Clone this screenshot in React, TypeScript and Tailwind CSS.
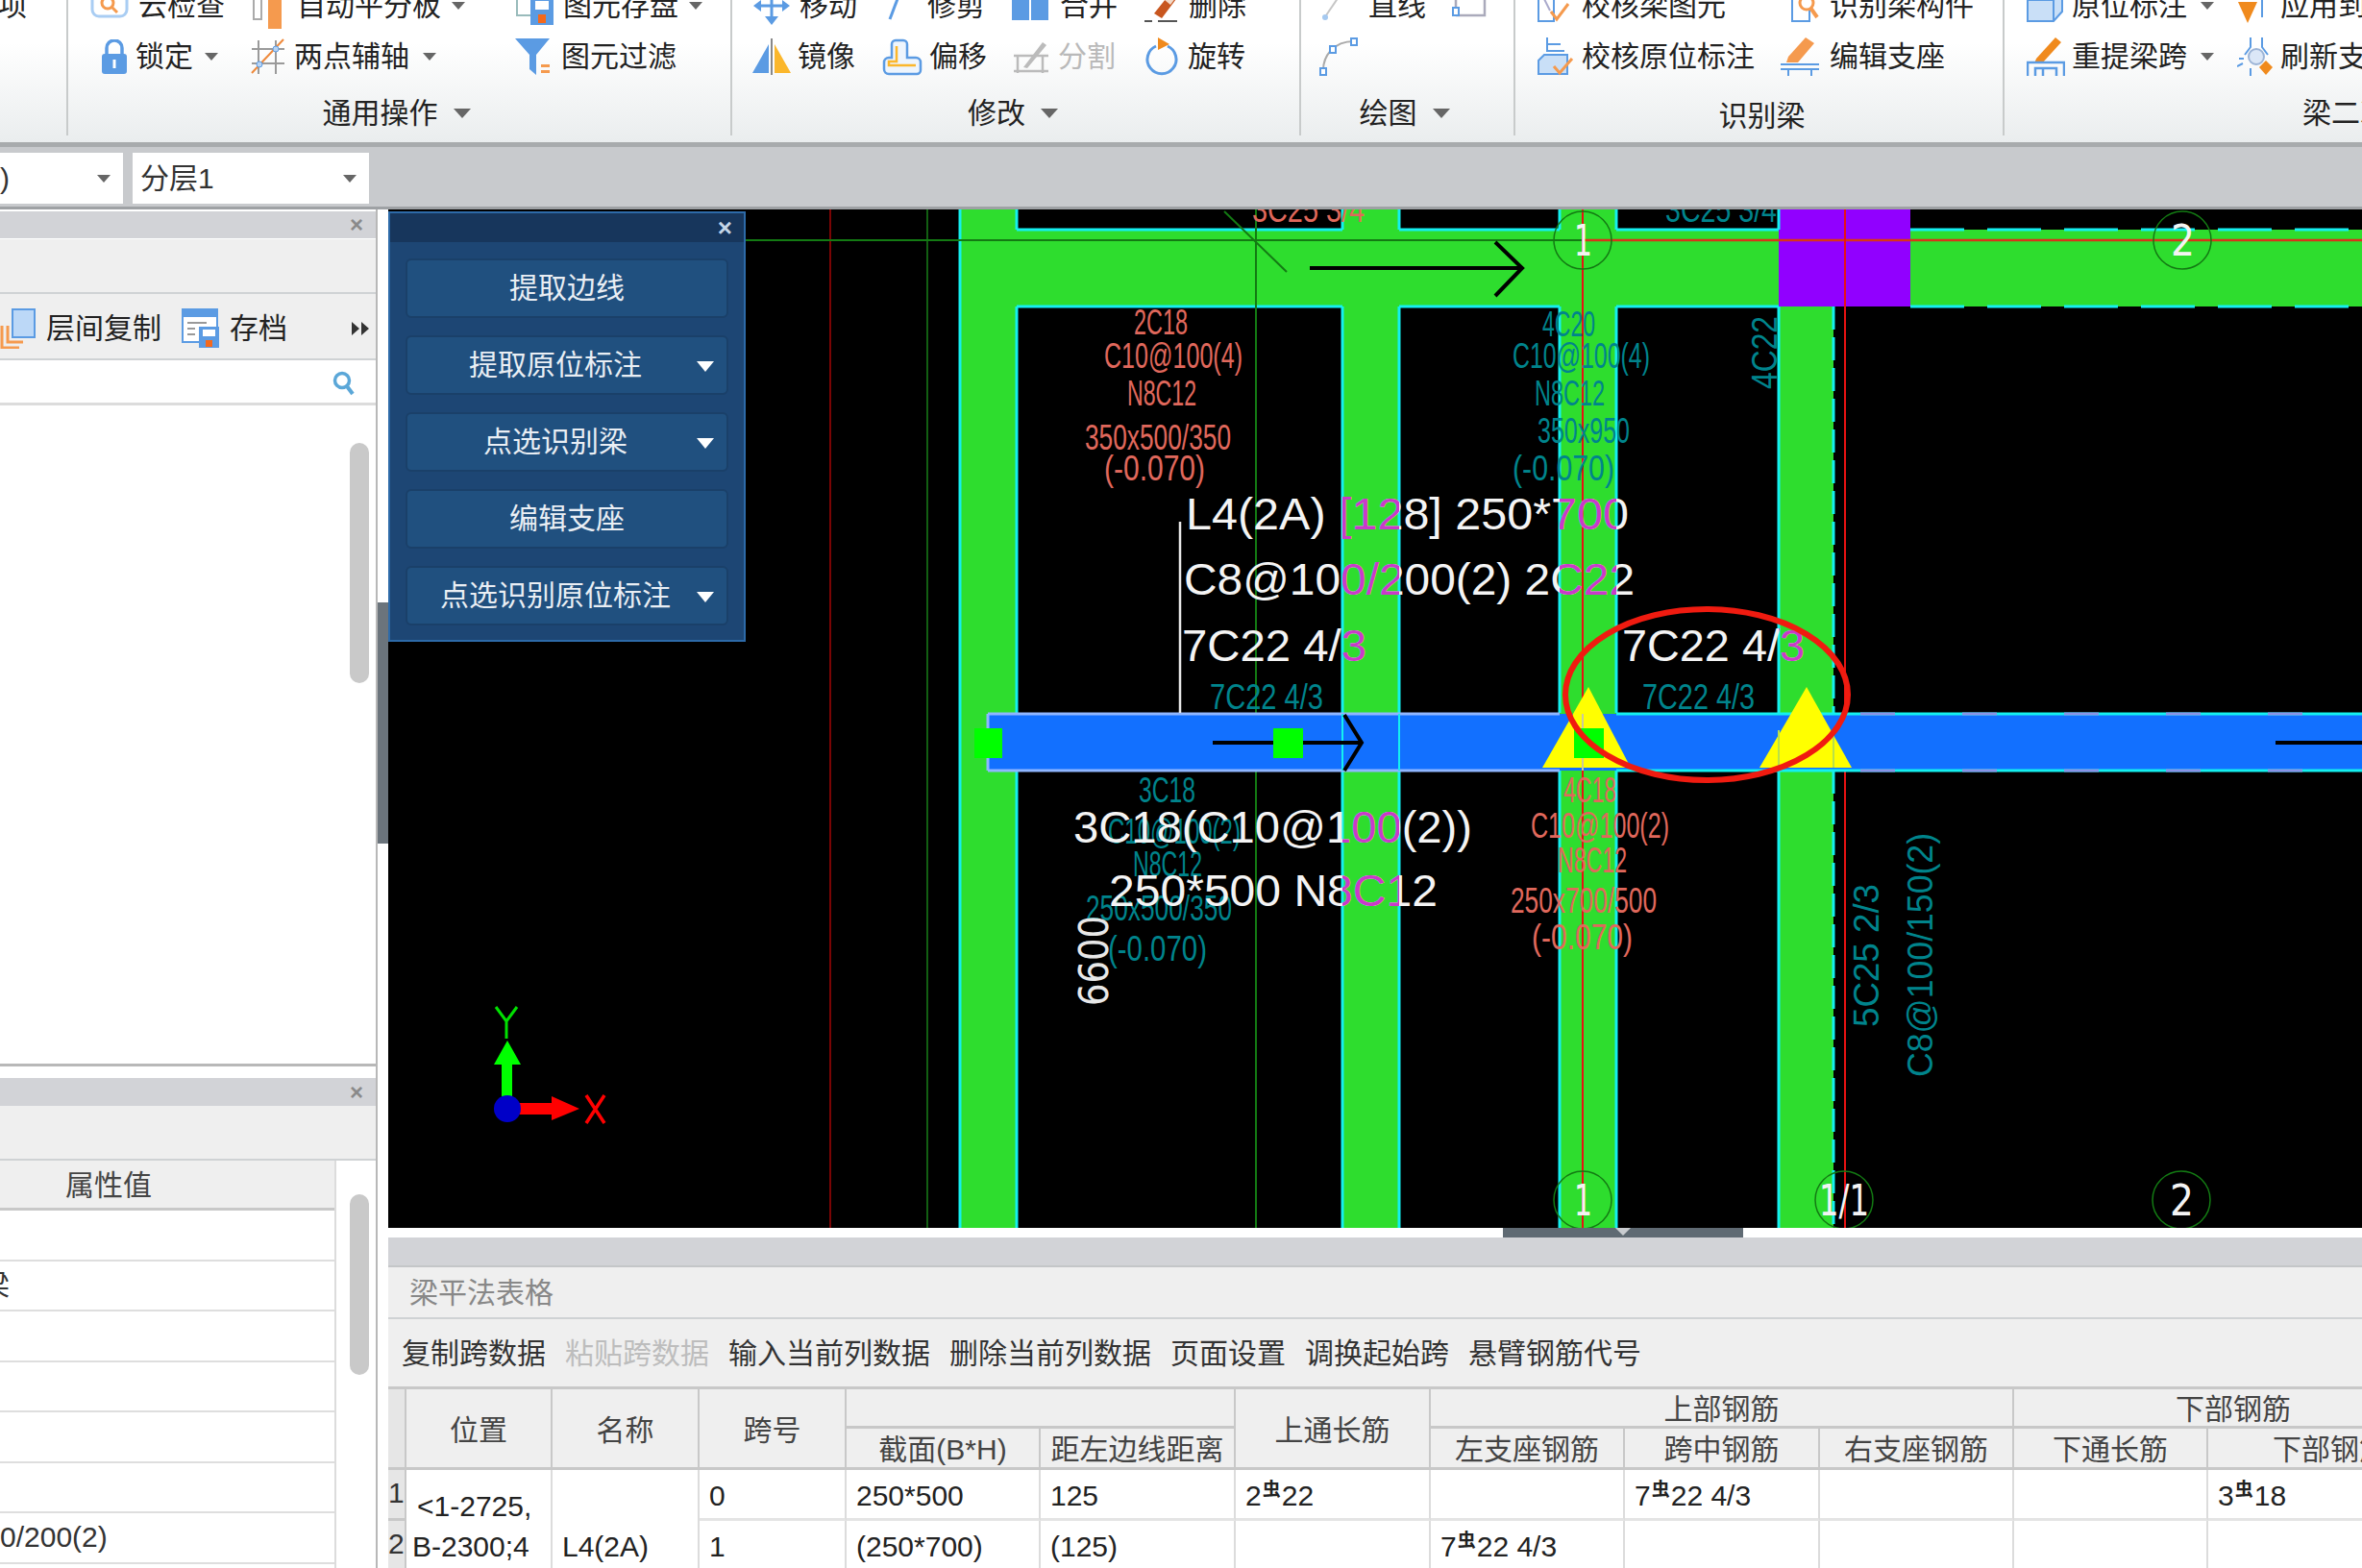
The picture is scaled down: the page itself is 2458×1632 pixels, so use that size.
import { ReactNode } from "react";

const BLUE = "#5b9be3";
const PALE = "#c9dff7";
const ORANGE = "#f59a4e";

function Caret({ className = "" }: { className?: string }) {
  return <span className={"inline-block border-x-[7px] border-x-transparent border-t-[8px] border-t-[#666] " + className} />;
}

function Tool({
  icon,
  text,
  className = "",
  slot = "w-[46px]",
  muted,
  caret,
}: {
  icon?: ReactNode;
  text?: string;
  className?: string;
  slot?: string;
  muted?: boolean;
  caret?: string;
}) {
  return (
    <div className={"flex items-center shrink-0 " + className}>
      <span className={"flex items-center shrink-0 " + slot}>{icon}</span>
      {text && <span className={"whitespace-nowrap " + (muted ? "text-[#b9b9b9]" : "text-[#222]")}>{text}</span>}
      {caret && <Caret className={caret} />}
    </div>
  );
}

function RibbonGroup({
  label,
  labelClass = "justify-center pr-[6px]",
  width,
  menu,
  children,
}: {
  label?: string;
  labelClass?: string;
  width: string;
  menu?: boolean;
  children?: ReactNode;
}) {
  return (
    <div className={"h-[141px] shrink-0 border-r-2 border-r-[#c8cbcb] flex flex-col " + width}>
      <div className="-mt-[21px] flex flex-col">{children}</div>
      {label && (
        <div className={"mt-[11px] h-[44px] flex items-center text-[#222] " + labelClass}>
          <span>{label}</span>
          {menu && <span className="ml-[16px] border-x-[9px] border-x-transparent border-t-[10px] border-t-[#666]" />}
        </div>
      )}
    </div>
  );
}

const IconCheck = () => (
  <svg width="40" height="34" viewBox="0 0 40 34">
    <rect x="2" y="2" width="36" height="26" rx="7" fill="none" stroke="#a9cdf3" strokeWidth="3" />
    <circle cx="18" cy="14" r="6" fill="none" stroke={ORANGE} strokeWidth="3" />
    <path d="M22 18l6 6" stroke={ORANGE} strokeWidth="3" />
  </svg>
);
const IconPlate = () => (
  <svg width="32" height="52" viewBox="0 0 32 52">
    <rect x="1" y="6" width="8" height="34" fill="none" stroke="#aaa" strokeWidth="2" />
    <rect x="16" y="6" width="14" height="44" fill={ORANGE} />
  </svg>
);
const IconStore = () => (
  <svg width="42" height="44" viewBox="0 0 42 44">
    <rect x="2" y="2" width="22" height="30" fill="#fff" stroke="#9bb" strokeWidth="2" />
    <rect x="16" y="14" width="24" height="28" fill={BLUE} />
    <rect x="21" y="17" width="14" height="9" fill="#fff" />
    <rect x="24" y="31" width="8" height="9" fill="#f5691c" />
  </svg>
);
const IconLock = () => (
  <svg width="28" height="36" viewBox="0 0 28 36">
    <path d="M6 16V9a8 8 0 0 1 16 0v7" fill="none" stroke={BLUE} strokeWidth="3.5" />
    <rect x="1" y="15" width="26" height="21" rx="3" fill={BLUE} />
    <rect x="12.5" y="21" width="3" height="9" fill="#fff" />
  </svg>
);
const IconTwoPoint = () => (
  <svg width="36" height="37" viewBox="0 0 36 37">
    <path d="M8 2v35M26 2v35M1 11h34M1 26h34" stroke="#9a9a9a" strokeWidth="2" />
    <path d="M1 36L34 1" stroke="#ef8a3c" strokeWidth="2" />
    <circle cx="9" cy="27" r="3" fill="#b9d4f3" stroke={BLUE} />
    <circle cx="26" cy="11" r="3" fill="#b9d4f3" stroke={BLUE} />
  </svg>
);
const IconFilter = () => (
  <svg width="36" height="38" viewBox="0 0 36 38">
    <path d="M0 0h36L22 17v21l-7-6V17z" fill={BLUE} />
    <path d="M27 27h9v3h-9zM27 33h9v3h-9z" fill={ORANGE} />
  </svg>
);
const IconMove = () => (
  <svg width="38" height="40" viewBox="0 0 38 40">
    <path d="M19 4v32M4 20h30" stroke={BLUE} strokeWidth="3" />
    <path d="M19 0l-6 8h12zM19 40l-7-9h14zM0 20l8-6v12zM38 20l-8-6v12z" fill={BLUE} />
  </svg>
);
const IconTrim = () => (
  <svg width="16" height="34" viewBox="0 0 16 34">
    <path d="M14 2L3 31" stroke={BLUE} strokeWidth="3" />
  </svg>
);
const IconMerge = () => (
  <svg width="38" height="30" viewBox="0 0 38 30">
    <rect width="18" height="30" fill={BLUE} />
    <rect x="20" width="18" height="30" fill={BLUE} />
    <rect y="0" width="38" height="6" fill="#7fb2ea" />
  </svg>
);
const IconErase = () => (
  <svg width="38" height="36" viewBox="0 0 38 36">
    <path d="M10 26L26 6l7 5-15 20z" fill="#c8561f" />
    <path d="M21 12l6-8 6 5-6 8z" fill="#f2d9c8" />
    <path d="M0 34h8M14 34h20" stroke="#555" strokeWidth="2" />
  </svg>
);
const IconMirror = () => (
  <svg width="40" height="38" viewBox="0 0 40 38">
    <path d="M17 6v30L0 36z" fill={BLUE} />
    <path d="M23 6v30h17z" fill="#fbb72c" />
    <path d="M20 0v38" stroke="#888" strokeWidth="2" />
  </svg>
);
const IconOffset = () => (
  <svg width="42" height="40" viewBox="0 0 42 40">
    <path d="M14 3h8a4 4 0 0 1 4 4v14h9a5 5 0 0 1 5 5v8a4 4 0 0 1-4 4H7a5 5 0 0 1-5-5v-7a5 5 0 0 1 5-5h3V7a4 4 0 0 1 4-4z" fill="#eef5fd" stroke={BLUE} strokeWidth="2.5" />
    <path d="M15 9v16H7v4h28" fill="none" stroke="#fbb72c" strokeWidth="2.5" />
  </svg>
);
const IconSplit = () => (
  <svg width="40" height="38" viewBox="0 0 40 38">
    <path d="M2 18h36M2 34h36M6 18v18M32 18v18" stroke="#bbb" strokeWidth="2.5" />
    <path d="M12 30L32 4l4 3-20 24z" fill="#bbb" />
  </svg>
);
const IconRotate = () => (
  <svg width="36" height="40" viewBox="0 0 36 40">
    <path d="M12 9a15 15 0 1 0 12 0" fill="none" stroke={BLUE} strokeWidth="3" />
    <path d="M14 0l12 7-12 6z" fill="#f08a1d" />
  </svg>
);
const IconLine = () => (
  <svg width="24" height="34" viewBox="0 0 24 34">
    <path d="M22 2L5 27" stroke="#c6c6c6" strokeWidth="2" />
    <circle cx="4" cy="29" r="3" fill="#a5c9f0" />
  </svg>
);
const IconRect = () => (
  <svg width="36" height="30" viewBox="0 0 36 30">
    <path d="M4 25V2M4 25h30V0" fill="none" stroke="#aab" strokeWidth="2.5" />
    <rect x="1" y="17" width="6" height="8" fill="#fff" stroke={BLUE} strokeWidth="2" />
  </svg>
);
const IconArc = () => (
  <svg width="40" height="40" viewBox="0 0 40 40">
    <path d="M4 34C4 20 14 4 36 4" fill="none" stroke="#aaa" strokeWidth="2" />
    <g fill="#fff" stroke={BLUE} strokeWidth="2">
      <rect x="1" y="32" width="6" height="7" />
      <rect x="33" y="1" width="6" height="7" />
      <rect x="11" y="9" width="6" height="7" />
    </g>
  </svg>
);
const IconVerifyA = () => (
  <svg width="36" height="38" viewBox="0 0 36 38">
    <rect x="1" y="1" width="16" height="34" fill="none" stroke={BLUE} strokeWidth="2" />
    <path d="M5 8l8 16" stroke="#aac" strokeWidth="2" />
    <path d="M14 25l6 8 12-16" fill="none" stroke={ORANGE} strokeWidth="3" />
  </svg>
);
const IconFind = () => (
  <svg width="30" height="38" viewBox="0 0 30 38">
    <rect x="1" y="1" width="18" height="34" fill="none" stroke={BLUE} strokeWidth="2" />
    <circle cx="16" cy="16" r="7" fill="#fff" stroke={ORANGE} strokeWidth="3" />
    <path d="M20 21l7 10" stroke={ORANGE} strokeWidth="4" />
  </svg>
);
const IconVerifyB = () => (
  <svg width="38" height="40" viewBox="0 0 38 40">
    <path d="M10 0v14h18M10 7h14" fill="none" stroke={BLUE} strokeWidth="2" />
    <path d="M1 38V24l6-6h24v20z" fill={PALE} stroke={BLUE} strokeWidth="2" />
    <path d="M17 30l6 7 13-15" fill="none" stroke={ORANGE} strokeWidth="3" />
  </svg>
);
const IconEditSeat = () => (
  <svg width="40" height="40" viewBox="0 0 40 40">
    <path d="M8 20L26 0l9 6-17 20H6z" fill={ORANGE} />
    <path d="M0 28h40M0 33h40" stroke={BLUE} strokeWidth="2" />
    <path d="M8 33v7M32 33v7" stroke={BLUE} strokeWidth="2" />
  </svg>
);
const IconBox = () => (
  <svg width="38" height="36" viewBox="0 0 38 36">
    <path d="M1 12l8-10h28v22l-9 10H1z" fill={PALE} stroke={BLUE} strokeWidth="2" />
    <path d="M1 12h27v22M28 12l9-10" fill="none" stroke={BLUE} strokeWidth="2" />
  </svg>
);
const IconApply = () => (
  <svg width="36" height="40" viewBox="0 0 36 40">
    <path d="M1 16h20L11 38z" fill="#f08a1d" />
    <path d="M11 2v12M26 2v30" stroke={BLUE} strokeWidth="2" />
  </svg>
);
const IconRebeam = () => (
  <svg width="40" height="40" viewBox="0 0 40 40">
    <path d="M10 22L30 0l6 5-20 22H8z" fill="#f08a1d" />
    <path d="M1 40V26h38v14M9 40V32h22v8M17 32v8" fill="none" stroke={BLUE} strokeWidth="2.5" />
  </svg>
);
const IconRefresh = () => (
  <svg width="40" height="40" viewBox="0 0 40 40">
    <path d="M14 0v10l-6 8M26 0v10l6 8M14 40v-8M2 22h5M0 30l6-3" fill="none" stroke={BLUE} strokeWidth="2" />
    <circle cx="20" cy="20" r="8" fill="#dbe7f7" stroke="#9cb4d6" strokeWidth="2" />
    <path d="M30 24l7 7-7 8-7-8z" fill="#f08a1d" />
  </svg>
);
const IconCopyFloor = () => (
  <svg width="38" height="42" viewBox="0 0 38 42">
    <path d="M2 18v23h18M8 18v17h16" fill="none" stroke={ORANGE} strokeWidth="3" />
    <rect x="13" y="1" width="23" height="29" fill="#bcd8f7" stroke={BLUE} strokeWidth="2" />
  </svg>
);
const IconArchive = () => (
  <svg width="40" height="42" viewBox="0 0 40 42">
    <rect x="1" y="1" width="36" height="34" fill="#fff" stroke={BLUE} strokeWidth="2" />
    <rect x="1" y="1" width="36" height="8" fill={BLUE} />
    <path d="M6 15h20M6 21h8M6 27h8" stroke="#999" strokeWidth="2" />
    <rect x="18" y="19" width="21" height="22" fill={BLUE} />
    <rect x="22" y="22" width="13" height="7" fill="#fff" />
    <rect x="25" y="33" width="7" height="7" fill="#f5691c" />
  </svg>
);
const IconMore = () => (
  <svg width="18" height="14" viewBox="0 0 18 14">
    <path d="M0 0l8 7-8 7zM10 0l8 7-8 7z" fill="#333" />
  </svg>
);

function Ribbon() {
  return (
    <div className="h-[153px] shrink-0 overflow-hidden border-b-[5px] border-b-[#a8abad] bg-linear-to-b from-white from-30% to-[#eaedee] flex items-start">
      <RibbonGroup width="w-[71px]">
        <div className="h-[53px] flex items-center justify-start w-[36px] overflow-hidden text-[#222]">
          <span className="whitespace-nowrap -ml-[2px]">项</span>
        </div>
      </RibbonGroup>
      <RibbonGroup width="w-[691px]" label="通用操作" menu>
        <div className="h-[53px] flex pl-[23px]">
          <Tool icon={<IconCheck />} text="云检查" slot="w-[50px]" className="w-[169px]" />
          <Tool icon={<IconPlate />} text="自动平分板" className="w-[273px]" caret="ml-[11px]" />
          <Tool icon={<IconStore />} text="图元存盘" slot="w-[50px]" caret="ml-[11px]" />
        </div>
        <div className="h-[53px] flex pl-[34px]">
          <Tool icon={<IconLock />} text="锁定" slot="w-[36px]" className="w-[156px]" caret="ml-[12px]" />
          <Tool icon={<IconTwoPoint />} text="两点辅轴" slot="w-[45px]" className="w-[275px]" caret="ml-[14px]" />
          <Tool icon={<IconFilter />} text="图元过滤" slot="w-[48px]" />
        </div>
      </RibbonGroup>
      <RibbonGroup width="w-[592px]" label="修改" menu>
        <div className="h-[53px] flex pl-[22px]">
          <Tool icon={<IconMove />} text="移动" slot="w-[48px]" className="w-[139px]" />
          <Tool icon={<IconTrim />} text="修剪" slot="w-[42px]" className="w-[130px]" />
          <Tool icon={<IconMerge />} text="合并" slot="w-[50px]" className="w-[138px]" />
          <Tool icon={<IconErase />} text="删除" />
        </div>
        <div className="h-[53px] flex pl-[21px]">
          <Tool icon={<IconMirror />} text="镜像" slot="w-[47px]" className="w-[135px]" />
          <Tool icon={<IconOffset />} text="偏移" slot="w-[49px]" className="w-[135px]" />
          <Tool icon={<IconSplit />} text="分割" slot="w-[48px]" className="w-[138px]" muted />
          <Tool icon={<IconRotate />} text="旋转" slot="w-[45px]" />
        </div>
      </RibbonGroup>
      <RibbonGroup width="w-[223px]" label="绘图" menu>
        <div className="h-[53px] flex pl-[21px]">
          <Tool icon={<IconLine />} text="直线" slot="w-[49px]" className="w-[136px]" />
          <Tool icon={<IconRect />} slot="w-[40px]" />
        </div>
        <div className="h-[53px] flex pl-[19px]">
          <Tool icon={<IconArc />} slot="w-[40px]" />
        </div>
      </RibbonGroup>
      <RibbonGroup width="w-[509px]" label="识别梁" labelClass="justify-center pl-[6px] pt-[6px]">
        <div className="h-[53px] flex pl-[23px]">
          <Tool icon={<IconVerifyA />} text="校核梁图元" className="w-[264px]" />
          <Tool icon={<IconFind />} text="识别梁构件" slot="w-[40px]" />
        </div>
        <div className="h-[53px] flex pl-[23px]">
          <Tool icon={<IconVerifyB />} text="校核原位标注" className="w-[253px]" />
          <Tool icon={<IconEditSeat />} text="编辑支座" slot="w-[51px]" />
        </div>
      </RibbonGroup>
      <div className="h-[141px] flex-1 flex flex-col overflow-hidden">
        <div className="-mt-[21px] flex flex-col">
          <div className="h-[53px] flex pl-[23px]">
            <Tool icon={<IconBox />} text="原位标注" slot="w-[47px]" className="w-[219px]" caret="ml-[14px]" />
            <Tool icon={<IconApply />} text="应用到同名梁" slot="w-[45px]" />
          </div>
          <div className="h-[53px] flex pl-[23px]">
            <Tool icon={<IconRebeam />} text="重提梁跨" slot="w-[47px]" className="w-[219px]" caret="ml-[14px]" />
            <Tool icon={<IconRefresh />} text="刷新支座尺寸" slot="w-[45px]" />
          </div>
        </div>
        <div className="mt-[11px] h-[44px] flex items-center pl-[310px] whitespace-nowrap text-[#222]">梁二次编辑</div>
      </div>
    </div>
  );
}

function Combo({ className, text }: { className: string; text: string }) {
  return (
    <div className={"h-[53px] bg-white flex items-center justify-between pr-[13px] text-[#333] " + className}>
      <span>{text}</span>
      <Caret />
    </div>
  );
}

function CloseX() {
  return <span className="text-[24px] font-bold leading-none text-[#8a8a8a]">×</span>;
}

function LeftPanel() {
  return (
    <div className="w-[404px] shrink-0 flex bg-white">
      <div className="w-[393px] shrink-0 flex flex-col border-r-2 border-r-[#b8b8b8]">
        <div className="mt-[2px] h-[28px] bg-[#d2d3d7] flex items-center justify-end pr-[13px] shrink-0">
          <CloseX />
        </div>
        <div className="mt-[1px] h-[57px] bg-[#efefef] border-b-2 border-b-[#cfd2d4] shrink-0" />
        <div className="h-[69px] bg-[#efefef] border-b-2 border-b-[#cfd2d4] flex items-center pt-[4px] text-[#555] shrink-0">
          <Tool icon={<IconCopyFloor />} text="层间复制" slot="w-[48px]" className="w-[189px]" />
          <Tool icon={<IconArchive />} text="存档" slot="w-[50px]" className="w-[177px]" />
          <IconMore />
        </div>
        <div className="h-[47px] border-b-[3px] border-b-[#dcdcdc] flex items-center justify-end pr-[21px] pt-[3px] shrink-0">
          <svg width="24" height="26" viewBox="0 0 24 26">
            <circle cx="10" cy="10" r="7.5" fill="none" stroke="#5ba7d8" strokeWidth="3.5" />
            <path d="M15 16l6 8" stroke="#5ba7d8" strokeWidth="4" />
          </svg>
        </div>
        <div className="h-[688px] border-b-[3px] border-b-[#b8b8b8] pt-[39px] pl-[364px] shrink-0">
          <div className="w-[20px] h-[250px] rounded-full bg-[#c9c9c9]" />
        </div>
        <div className="mt-[12px] h-[29px] bg-[#d2d3d7] flex items-center justify-end pr-[13px] shrink-0">
          <CloseX />
        </div>
        <div className="h-[57px] bg-[#efefef] border-b-2 border-b-[#cfd2d4] shrink-0" />
        <div className="flex-1 flex overflow-hidden">
          <div className="w-[350px] shrink-0 border-r-2 border-r-[#dcdcdc]">
            <div className="h-[52px] bg-[#efefef] border-b-[3px] border-b-[#c8c8c8] flex items-center text-[#444] pl-[68px] pt-[3px]">属性值</div>
            <PropRow />
            <PropRow text="梁" cut />
            <PropRow />
            <PropRow />
            <PropRow />
            <PropRow />
            <PropRow text="0/200(2)" />
            <PropRow />
          </div>
          <div className="pt-[35px] pl-[14px]">
            <div className="w-[20px] h-[188px] rounded-full bg-[#c9c9c9]" />
          </div>
        </div>
      </div>
      <div className="flex-1 pt-[409px]">
        <div className="h-[251px] bg-[#6b747c]" />
      </div>
    </div>
  );
}

function PropRow({ text, cut }: { text?: string; cut?: boolean }) {
  return (
    <div className="h-[52.5px] border-b-2 border-b-[#dedede] flex items-center overflow-hidden text-[#333]">
      <span className={cut ? "-ml-[20px]" : ""}>{text}</span>
    </div>
  );
}

function FloatButton({ text, caret }: { text: string; caret?: boolean }) {
  return (
    <div className={"h-[62px] rounded-md border-2 border-[#1a4069] bg-[#20507f] text-[#e9eef4] flex items-center justify-center relative " + (caret ? "pr-[24px]" : "")}>
      {text}
      {caret && <span className="absolute right-[13px] top-[25px] border-x-[9px] border-x-transparent border-t-[11px] border-t-white" />}
    </div>
  );
}

function Cad({
  x,
  y,
  w,
  size = 37,
  color,
  up,
  font = "Liberation Sans",
  children,
}: {
  x: number;
  y: number;
  w: number;
  size?: number;
  color: string;
  up?: boolean;
  font?: string;
  children: string;
}) {
  return (
    <text
      x={x}
      y={y}
      fontSize={size}
      fill={color}
      fontFamily={font}
      textLength={w}
      lengthAdjust="spacingAndGlyphs"
      transform={up ? `rotate(-90 ${x} ${y})` : undefined}
    >
      {children}
    </text>
  );
}

// white text that turns magenta where it runs over a green column
function Note({ x, y, w, children }: { x: number; y: number; w: number; children: string }) {
  return (
    <>
      <Cad x={x} y={y} w={w} size={47} color="#f4f4f4">{children}</Cad>
      <g clipPath="url(#columns)">
        <Cad x={x} y={y} w={w} size={47} color="#c93ac9">{children}</Cad>
      </g>
    </>
  );
}

const TEAL = "#00848c";
const SALMON = "#e0685c";
const GREEN = "#2edd2e";
const CYAN = "#14f0f0";

function Axis({ x, y, label, dx = -9, w = 19 }: { x: number; y: number; label: string; dx?: number; w?: number }) {
  return (
    <>
      <circle cx={x} cy={y} r="30" fill="none" stroke="#137a13" strokeWidth="1.5" />
      <Cad x={x + dx} y={y + 16} w={w} size={44} color="#f4f4f4" font="DejaVu Sans">{label}</Cad>
    </>
  );
}

function Drawing() {
  const vEdge = (x: number) => (
    <path d={`M${x} 218V239M${x} 319V742M${x} 802V1278`} stroke={CYAN} strokeWidth="3" />
  );
  return (
    <svg className="block" width="2054" height="1060" viewBox="404 218 2054 1060">
      <defs>
        <clipPath id="columns">
          <rect x="1397" y="218" width="59" height="1060" />
          <rect x="1623" y="218" width="59" height="1060" />
          <rect x="1851" y="218" width="57" height="1060" />
        </clipPath>
      </defs>
      <rect x="404" y="218" width="2054" height="1060" fill="#000" />
      <path d="M864 218V1278" stroke="#7a0404" strokeWidth="2" />
      <path d="M965 218V1278" stroke="#125e12" strokeWidth="2" />

      <rect x="999" y="239" width="1459" height="80" fill={GREEN} />
      <rect x="999" y="218" width="59" height="1060" fill={GREEN} />
      <rect x="1397" y="218" width="59" height="1060" fill={GREEN} />
      <rect x="1623" y="218" width="59" height="1060" fill={GREEN} />
      <rect x="1851" y="218" width="57" height="1060" fill={GREEN} />
      <rect x="1851" y="218" width="137" height="101" fill="#9100ff" />

      <path d="M999 218V1278" stroke={CYAN} strokeWidth="3" />
      {vEdge(1058)}
      {vEdge(1397)}
      {vEdge(1456)}
      {vEdge(1623)}
      {vEdge(1682)}
      {vEdge(1851)}
      <path d="M1908 319V742M1908 802V1278" stroke={CYAN} strokeWidth="3" strokeDasharray="24 8" />
      <path d="M1058 239H1397M1456 239H1623M1682 239H1851M1058 319H1397M1456 319H1623M1682 319H1851" stroke={CYAN} strokeWidth="3" />
      <path d="M1988 239H2458M1988 319H2458" stroke={CYAN} strokeWidth="3" strokeDasharray="56 24" />

      <path d="M776 250H1647" stroke="#137a13" strokeWidth="2" />
      <path d="M1307 218V1278" stroke="#137a13" strokeWidth="2" />
      <path d="M1274 220L1339 283" stroke="#137a13" strokeWidth="2" />
      <path d="M1647 250H2458" stroke="#d8341a" strokeWidth="2.5" />
      <path d="M1647 218V1278M1920 218V1278" stroke="#e81212" strokeWidth="2" />

      <path d="M1363 279H1584M1556 252L1584 279L1556 308" fill="none" stroke="#000" strokeWidth="4" />

      <Cad x={1303} y={231} w={117} color={SALMON}>3C25 3/4</Cad>
      <Cad x={1733} y={231} w={116} color={TEAL}>3C25 3/4</Cad>
      <Cad x={1849} y={405} w={76} color={TEAL} up>4C22</Cad>

      <Cad x={1180} y={348} w={56} color={SALMON}>2C18</Cad>
      <Cad x={1149} y={383} w={144} color={SALMON}>C10@100(4)</Cad>
      <Cad x={1173} y={422} w={72} color={SALMON}>N8C12</Cad>
      <Cad x={1129} y={468} w={152} color={SALMON}>350x500/350</Cad>
      <Cad x={1149} y={500} w={105} color={SALMON}>(-0.070)</Cad>

      <Cad x={1605} y={350} w={55} color={TEAL}>4C20</Cad>
      <Cad x={1574} y={383} w={143} color={TEAL}>C10@100(4)</Cad>
      <Cad x={1597} y={422} w={73} color={TEAL}>N8C12</Cad>
      <Cad x={1600} y={461} w={96} color={TEAL}>350x950</Cad>
      <Cad x={1574} y={500} w={106} color={TEAL}>(-0.070)</Cad>

      <Cad x={1185} y={835} w={59} color={TEAL}>3C18</Cad>
      <Cad x={1153} y={878} w={138} color={TEAL}>C10@100(2)</Cad>
      <Cad x={1179} y={912} w={72} color={TEAL}>N8C12</Cad>
      <Cad x={1130} y={958} w={152} color={TEAL}>250x500/350</Cad>
      <Cad x={1153} y={1000} w={103} color={TEAL}>(-0.070)</Cad>

      <Cad x={1627} y={835} w={55} color={SALMON}>4C18</Cad>
      <Cad x={1593} y={872} w={144} color={SALMON}>C10@100(2)</Cad>
      <Cad x={1621} y={908} w={72} color={SALMON}>N8C12</Cad>
      <Cad x={1572} y={950} w={152} color={SALMON}>250x700/500</Cad>
      <Cad x={1594} y={988} w={105} color={SALMON}>(-0.070)</Cad>

      <Cad x={1955} y={1069} w={149} color={TEAL} up>5C25 2/3</Cad>
      <Cad x={2011} y={1121} w={254} color={TEAL} up>C8@100/150(2)</Cad>

      <Cad x={1259} y={738} w={118} color={TEAL}>7C22 4/3</Cad>
      <Cad x={1709} y={738} w={117} color={TEAL}>7C22 4/3</Cad>

      <rect x="1028" y="743" width="1430" height="59" fill="#1270ff" />
      <path d="M1028 743H1623M1028 802H1623" stroke="#8fb6ff" strokeWidth="3" />
      <path d="M1682 743H2458M1682 802H2458" stroke={CYAN} strokeWidth="3" />
      <path d="M1936 743H2458M1936 802H2458" stroke="#8a93e8" strokeWidth="3" strokeDasharray="36 70" />
      <path d="M1028 743V802" stroke="#8fb6ff" strokeWidth="3" />
      <path d="M1397 743V802M1456 743V802" stroke={CYAN} strokeWidth="2" />
      <path d="M1262 773H1417M1399 744L1417 773L1399 802" fill="none" stroke="#000" strokeWidth="4" />
      <path d="M2368 773H2458" stroke="#000" strokeWidth="4" />

      <path d="M1653 715L1697 799H1605Z" fill="#ffff00" />
      <path d="M1880 715L1927 799H1831Z" fill="#ffff00" />
      <path d="M1647 743V802" stroke="#c9c9a0" strokeWidth="2" />
      <path d="M1851 760V799M1908 760V799" stroke="#b8e04a" strokeWidth="2" />
      <rect x="1014" y="758" width="29" height="31" fill="#00ff00" />
      <rect x="1325" y="758" width="31" height="31" fill="#00ff00" />
      <rect x="1638" y="758" width="31" height="31" fill="#00ff00" />

      <path d="M1228 543V742" stroke="#e8e8e8" strokeWidth="2.5" />
      <Note x={1234} y={551} w={461}>L4(2A) [128] 250*700</Note>
      <Note x={1232} y={619} w={469}>C8@100/200(2) 2C22</Note>
      <Note x={1230} y={688} w={192}>7C22 4/3</Note>
      <Note x={1688} y={688} w={190}>7C22 4/3</Note>
      <Note x={1117} y={877} w={415}>3C18(C10@100(2))</Note>
      <Note x={1154} y={943} w={342}>250*500 N8C12</Note>
      <Cad x={1153} y={1047} w={94} size={42} color="#e8e8e8" font="DejaVu Sans" up>6600</Cad>

      <Axis x={1647} y={250} label="1" />
      <Axis x={2271} y={250} label="2" dx={-12} w={25} />
      <Axis x={1647} y={1249} label="1" />
      <Axis x={1919} y={1249} label="1/1" dx={-26} w={52} />
      <Axis x={2270} y={1249} label="2" dx={-12} w={25} />

      <ellipse cx="1776" cy="723" rx="147" ry="89" fill="none" stroke="#f01b10" strokeWidth="6" />

      <path d="M516 1048l11 15 11-15M527 1063v18" fill="none" stroke="#00e000" strokeWidth="3" />
      <path d="M528 1083l14 25h-9v33h-11v-33h-8z" fill="#00ff00" />
      <path d="M540 1148h34v-7l29 13-29 12v-6h-34z" fill="#ff0000" />
      <circle cx="528" cy="1154" r="14" fill="#0000c8" />
      <path d="M610 1140l19 29M629 1140l-19 29" stroke="#ff0000" strokeWidth="3.5" />
    </svg>
  );
}

const headCell = "bg-[#efefef] border-r-2 border-r-[#c8c8c8] border-b-[3px] border-b-[#c8c8c8] flex items-center justify-center pt-[4px] text-[#444] whitespace-nowrap";
const bodyCell = "bg-white border-r-2 border-r-[#dcdcdc] border-b-[3px] border-b-[#e4e4e4] flex items-center pl-[10px] pt-[3px] text-[#222] whitespace-nowrap";

function Rebar({ n, rest }: { n: string; rest: string }) {
  return (
    <>
      {n}
      <span className="text-[19px] font-bold leading-none -translate-y-[6px] inline-block mx-[1px]">虫</span>
      {rest}
    </>
  );
}

function BeamTable() {
  return (
    <div className="grid grid-cols-[19px_152px_153px_153px_202px_203px_203px_202px_203px_202px_202px_256px] grid-rows-[41px_43px_53px_53px]">
      <div className="row-span-2 bg-[#e6e6e6] border-r-2 border-r-[#c8c8c8] border-b-[3px] border-b-[#c8c8c8]" />
      <div className={headCell + " row-span-2"}>位置</div>
      <div className={headCell + " row-span-2"}>名称</div>
      <div className={headCell + " row-span-2"}>跨号</div>
      <div className={headCell + " col-span-2"} />
      <div className={headCell + " row-span-2"}>上通长筋</div>
      <div className={headCell + " col-span-3"}>上部钢筋</div>
      <div className={headCell + " col-span-2"}>下部钢筋</div>

      <div className={headCell}>截面(B*H)</div>
      <div className={headCell}>距左边线距离</div>
      <div className={headCell}>左支座钢筋</div>
      <div className={headCell}>跨中钢筋</div>
      <div className={headCell}>右支座钢筋</div>
      <div className={headCell}>下通长筋</div>
      <div className={headCell}>下部钢筋</div>

      <div className="bg-[#e6e6e6] border-r-2 border-r-[#c8c8c8] border-b-[3px] border-b-[#c8c8c8] text-[#333] leading-[48px]">1</div>
      <div className="row-span-2 bg-white border-r-2 border-r-[#dcdcdc] pl-[6px] pt-[17px] leading-[42px] text-[#222] whitespace-nowrap">
        <div className="pl-[5px]">&lt;1-2725,</div>
        <div>B-2300;4</div>
      </div>
      <div className="row-span-2 bg-white border-r-2 border-r-[#dcdcdc] pl-[10px] pt-[59px] leading-[42px] text-[#222]">L4(2A)</div>
      <div className={bodyCell}>0</div>
      <div className={bodyCell}>250*500</div>
      <div className={bodyCell}>125</div>
      <div className={bodyCell}><Rebar n="2" rest="22" /></div>
      <div className={bodyCell} />
      <div className={bodyCell}><Rebar n="7" rest="22 4/3" /></div>
      <div className={bodyCell} />
      <div className={bodyCell} />
      <div className={bodyCell}><Rebar n="3" rest="18" /></div>

      <div className="bg-[#e6e6e6] border-r-2 border-r-[#c8c8c8] text-[#333] leading-[48px]">2</div>
      <div className={bodyCell}>1</div>
      <div className={bodyCell}>(250*700)</div>
      <div className={bodyCell}>(125)</div>
      <div className={bodyCell} />
      <div className={bodyCell}><Rebar n="7" rest="22 4/3" /></div>
      <div className={bodyCell} />
      <div className={bodyCell} />
      <div className={bodyCell} />
      <div className={bodyCell} />
    </div>
  );
}

function LowerPanel() {
  return (
    <div className="flex-1 overflow-hidden bg-white">
      <div className="h-[10px] flex pl-[1160px]">
        <div className="w-[250px] bg-[#5f6a73] flex justify-center">
          <span className="border-x-[8px] border-x-transparent border-t-[8px] border-t-[#c9ccd0]" />
        </div>
      </div>
      <div className="h-[31px] bg-[#d2d3d7] border-b-2 border-b-[#c4c6c8]" />
      <div className="h-[54px] bg-[#efefef] border-b-2 border-b-[#cfd2d4] flex items-center pl-[22px] pt-[2px] text-[#888]">梁平法表格</div>
      <div className="h-[73px] bg-[#efefef] border-b-[3px] border-b-[#c8c8c8] flex items-center gap-5 pl-[14px] pt-[2px] text-[#333] whitespace-nowrap">
        <span>复制跨数据</span>
        <span className="text-[#bdbdbd]">粘贴跨数据</span>
        <span>输入当前列数据</span>
        <span>删除当前列数据</span>
        <span>页面设置</span>
        <span>调换起始跨</span>
        <span>悬臂钢筋代号</span>
      </div>
      <BeamTable />
    </div>
  );
}

export default function App() {
  return (
    <div className="w-[2458px] h-[1632px] overflow-hidden flex flex-col bg-white text-[30px] leading-none font-['Liberation_Sans','Noto_Sans_CJK_SC',sans-serif]">
      <Ribbon />
      <div className="h-[65px] shrink-0 bg-[#c8cacd] border-b-[3px] border-b-[#9ea1a4] flex gap-[10px] pt-[6px]">
        <Combo className="w-[128px]" text=")" />
        <Combo className="w-[246px] pl-[8px]" text="分层1" />
      </div>
      <div className="flex-1 flex overflow-hidden">
        <LeftPanel />
        <div className="flex-1 flex flex-col">
          <div className="relative h-[1060px] shrink-0 bg-black">
            <Drawing />
            <div className="absolute left-0 top-[2px] w-[372px] h-[448px] bg-[#1d4674] border-2 border-[#2d6aa8] flex flex-col">
              <div className="h-[30px] bg-[#17365c] flex items-center justify-end pr-[12px] text-[26px] font-bold text-[#c5d7e8]">×</div>
              <div className="flex flex-col gap-[18px] px-[16px] pt-[17px]">
                <FloatButton text="提取边线" />
                <FloatButton text="提取原位标注" caret />
                <FloatButton text="点选识别梁" caret />
                <FloatButton text="编辑支座" />
                <FloatButton text="点选识别原位标注" caret />
              </div>
            </div>
          </div>
          <LowerPanel />
        </div>
      </div>
    </div>
  );
}
